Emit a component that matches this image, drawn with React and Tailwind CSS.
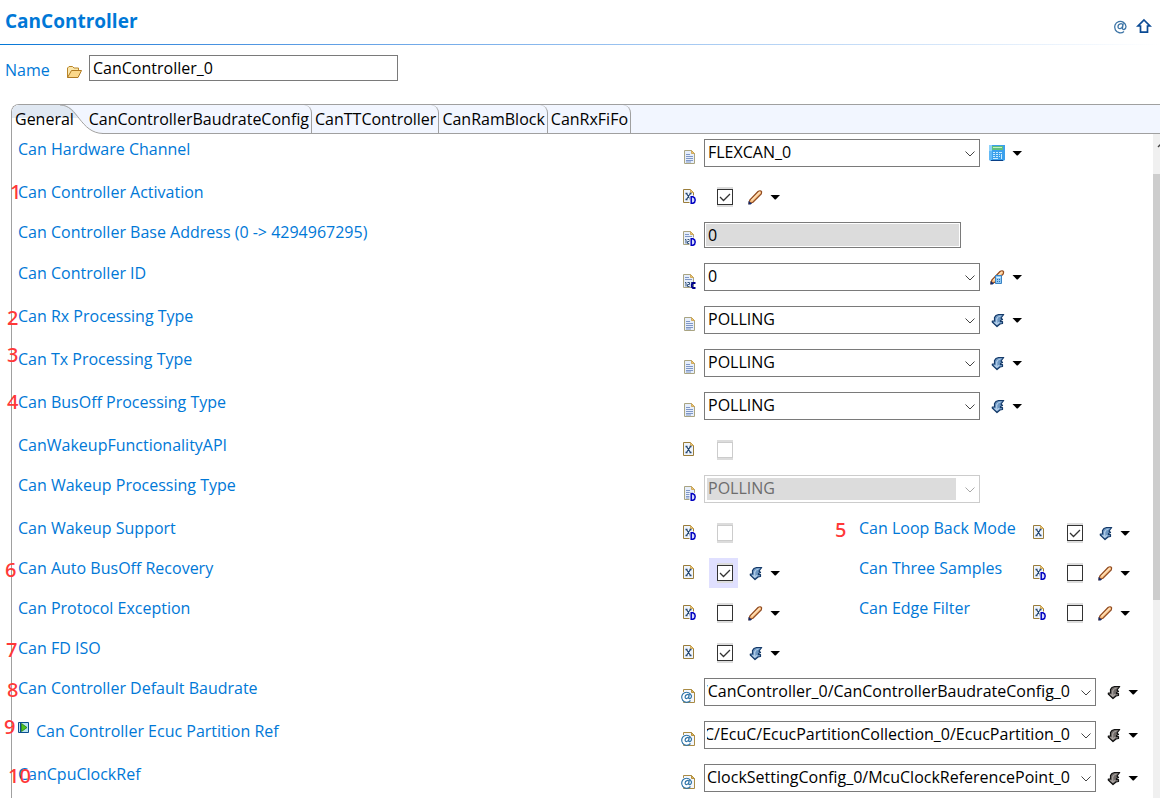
import React from "react";

/* ---------- icons ---------- */

function Badge({ letter }) {
  return letter === "D" ? (
    <g>
      <path d="M8.500 7.500h4.500l2.500 2v5l-2 1.500h-5z" fill="#fff" />
      <path d="M10.200 8.700h1.800q2.200.8 2.200 3.300t-2.200 3.300h-1.800z" fill="#d5dcfb" stroke="#0000c0" strokeWidth="1.500" />
    </g>
  ) : (
    <path d="M14.500 10h-2.500l-1.200 1.200v2.600l1.200 1.200h2.500" fill="none" stroke="#00008c" strokeWidth="1.800" />
  );
}

function DocIcon({ kind, badge }) {
  if (kind === "ref") {
    return (
      <svg viewBox="0 0 16 16" className="h-4 w-4 shrink-0 overflow-visible" aria-hidden="true">
        <path d="M2.500 1.500h8l3 3v10h-11z" fill="#f3f6fc" stroke="#a98b45" />
        <path d="M10.500 1.500v3h3z" fill="#e0b95c" stroke="#b39142" />
        <circle cx="5.500" cy="8.500" r="5.600" fill="#fff" />
        <path d="M9.500 12.500a5 5 0 1 1 1-4.500c0 3-2.900 3.500-2.700 1.500l.5-3.500M8 8c0-2.600-3.900-1.600-3.900 1 0 2.600 3.400 1.800 3.900-1" fill="none" stroke="#2f74a8" strokeWidth="1.200" />
      </svg>
    );
  }
  const isX = kind === "x";
  return (
    <svg viewBox="0 0 16 16" className="h-4 w-4 shrink-0 overflow-visible" aria-hidden="true">
      <g className={kind === "lines" ? "translate-x-px" : ""}>
        <path d="M2.500 1.500h7l3 3v10h-10z" fill={isX ? "#eef4fd" : "#e6eefb"} stroke={isX ? "#9a7d3a" : "#a9a482"} />
        <path d="M9.500 1.500v3h3z" fill="#ecc678" stroke="#c9a049" strokeWidth="0.800" />
        {kind === "lines" && (
          <path d="M4 5.500h4M4 7.500h7M4 9.500h7M4 11.500h7M4 13h5" stroke="#7f97c6" />
        )}
      </g>
      {kind === "num" && (
        <g>
          <path d="M4 4.500h4M4 6.500h7" stroke="#7f97c6" />
          <path d="M4 9.500h1v4M6.500 9.500h2v2h-2v2h2M10 9.500h2v4h-2M10 11.500h2" fill="none" stroke="#35557d" />
        </g>
      )}
      {isX && (
        <path d="M4.500 5.500h2M8.500 5.500h2M4.500 11.500h2M8.500 11.500h2M5.500 5.500l4 6M9.500 5.500l-4 6" stroke="#24466f" strokeWidth="1.300" />
      )}
      {badge && <Badge letter={badge} />}
    </svg>
  );
}

function ActionIcon({ kind }) {
  const cls = "h-4 w-4";
  if (kind === "calc") {
    return (
      <svg viewBox="0 0 16 16" className={cls} aria-hidden="true">
        <path d="M0 0h16v15l-2 1H2l-2-1z" fill="#3ba0ec" />
        <path d="M0 0h3v6H0z" fill="#8fd3fb" />
        <path d="M0 6h3v9H0z" fill="#62b9f6" />
        <path d="M3 1h11v4H3z" fill="#5fc07e" />
        <path d="M4 2h9v1H4z" fill="#c6f0c4" />
        <path d="M4 7h2v1H4zM7 7h2v1H7zM10 7h3v1h-3zM4 9h2v1H4zM7 9h2v1H7zM10 9h1v1h-1zM12 9h1v5h-1zM4 11h2v1H4zM7 11h2v1H7zM10 11h1v1h-1zM4 13h5v1H4z" fill="#c9ebff" />
        <path d="M2 15h12v1H2z" fill="#0a3f86" />
      </svg>
    );
  }
  if (kind === "pencil" || kind === "pencilCalc") {
    return (
      <svg viewBox="0 0 16 16" className={cls} aria-hidden="true">
        <path d="M2 14.500l.8-3.500L11 2.500q1.800-1.200 3-.5t.3 2.800L6 13.200z" fill="#f6ba7c" stroke="#8f4a20" strokeWidth="1.200" />
        <path d="M4.500 11.500L13 3" stroke="#ffe0b8" strokeWidth="1.600" />
        <path d="M1.500 15.500v-3.500l3.500 2.500-1.500 1z" fill="#132a6b" />
        {kind === "pencilCalc" && (
          <g>
            <path d="M6.500 6.500h6v8h-6z" fill="#8fc9f5" stroke="#3a83c4" />
            <path d="M7.500 8.500h4" stroke="#dff5ff" />
            <path d="M8 10.500h1M10 10.500h1M8 12.500h1M10 12.500h1" stroke="#2b6fb3" />
          </g>
        )}
      </svg>
    );
  }
  const dark = kind === "arrowDark";
  return (
    <svg viewBox="0 0 16 16" className={cls} aria-hidden="true">
      <path
        d="M14.700 2.500H9.500Q6.500 3 5.500 5.500V9H3.300v1L8 14.500l3-2.500 2.500-.5V9.500h-2V8.500l2-1-1.500-1.500z"
        fill={dark ? "#6f6a68" : "#6d97c2"}
        stroke={dark ? "#111" : "#153a69"}
        strokeWidth="1.200"
        strokeLinejoin="round"
      />
      <path d="M11.500 4Q8.500 4.500 7.700 7v5.500M5.500 10.300l2.300 2 2.500-2" fill="none" stroke={dark ? "#a9a3a0" : "#b4cfea"} strokeWidth="1.200" />
    </svg>
  );
}

function Action({ kind, label }) {
  return (
    <div className="ml-[9px] flex items-center gap-[7px]">
      <button type="button" aria-label={"Edit " + label}>
        <ActionIcon kind={kind} />
      </button>
      <button type="button" aria-label={"Options for " + label}>
        <svg viewBox="0 0 10 6" className="h-1.5 w-2.5" aria-hidden="true">
          <path d="M.5 1h9.500L5.700 5.500h-.9z" fill="#000" />
        </svg>
      </button>
    </div>
  );
}

/* ---------- controls ---------- */

function Combo({ id, value, wide, disabled }) {
  return (
    <div
      className={
        "relative flex h-7 shrink-0 border bg-white p-0.5 " +
        (wide ? "w-[392px] " : "w-[276px] ") +
        (disabled ? "border-[#cccccc]" : "border-[#7a7a7a]")
      }
    >
      <select
        id={id}
        disabled={disabled}
        defaultValue={value}
        className={
          "min-w-0 flex-1 appearance-none pb-0.5 leading-5 outline-none " +
          (wide ? "pr-[23px] [direction:rtl] " : "pl-px ") +
          (disabled ? "mr-[21px] bg-[#dcdcdc] text-[#6d6d6d] opacity-100" : "bg-transparent text-black")
        }
      >
        <option value={value}>{value}</option>
      </select>
      <svg
        viewBox="0 0 10 6"
        className="pointer-events-none absolute top-[11px] right-1 h-1.5 w-2.5"
        aria-hidden="true"
      >
        <path d="M.5 .5L5 5L9.500 .5" fill="none" stroke={disabled ? "#a8a8a8" : "#444"} />
      </svg>
    </div>
  );
}

function Check({ id, checked, disabled, active }) {
  return (
    <span className={"ml-[5px] flex h-[30px] w-[29px] shrink-0 items-center pl-2 " + (active ? "bg-[#e0e0ff]" : "")}>
      <span className="relative grid h-5 w-4 place-items-center bg-[#dcdcdc]">
        <input
          id={id}
          type="checkbox"
          defaultChecked={checked}
          disabled={disabled}
          className={
            "peer h-4 w-4 appearance-none border bg-white " + (disabled ? "border-[#cccccc]" : "border-[#333333]")
          }
        />
        <svg
          viewBox="0 0 16 16"
          className="pointer-events-none invisible absolute top-0.5 left-0 h-4 w-4 peer-checked:visible"
          aria-hidden="true"
        >
          <path d="M3 8l3.500 3.500L13 5" fill="none" stroke="#333" strokeWidth="1.300" />
        </svg>
      </span>
    </span>
  );
}

function Field({ f }) {
  const id = f.label.replace(/[^A-Za-z]/g, "");
  const iconPad = f.type === "combo" ? "pt-2.5" : f.type === "text" ? "pt-2" : "pt-1.5";
  return (
    <>
      <div className={"w-[23px] shrink-0 " + iconPad}>
        <DocIcon kind={f.icon} badge={f.badge} />
      </div>
      <div className="flex items-center">
        {f.type === "combo" && <Combo id={id} value={f.value} wide={f.wide} disabled={f.disabled} />}
        {f.type === "text" && (
          <input
            id={id}
            type="text"
            readOnly
            value={f.value}
            className="h-[26px] w-[257px] border border-[#7a7a7a] bg-[#dcdcdc] px-[3px] shadow-[inset_0_0_0_1px_white] outline-none"
          />
        )}
        {f.type === "check" && <Check id={id} checked={f.checked} disabled={f.disabled} active={f.active} />}
        {f.action && <Action kind={f.action} label={f.label} />}
      </div>
    </>
  );
}

function Note({ n }) {
  return (
    <span className={"pointer-events-none absolute font-['Noto_Sans',sans-serif] text-xl leading-5 font-medium text-[#ff3838] " + n.at}>
      {n.text}
    </span>
  );
}

function FieldLabel({ f }) {
  return (
    <div className="relative flex gap-[7px] leading-5 whitespace-nowrap text-[#0078d7]">
      {f.marker && (
        <svg viewBox="0 0 11 11" className="mt-px h-[11px] w-[11px]" aria-hidden="true">
          <path d="M.5 .5h10v10H.5z" fill="#b9e3f2" stroke="#0b4f8f" />
          <path d="M2.500 1v9" stroke="#0b4f8f" />
          <path d="M3.500 1.500l5.500 4-5.500 4z" fill="#4fc21e" stroke="#1e7a12" strokeWidth="0.800" />
        </svg>
      )}
      <label htmlFor={f.label.replace(/[^A-Za-z]/g, "")}>{f.label}</label>
      {f.note && <Note n={f.note} />}
    </div>
  );
}

/* ---------- data ---------- */

const rows = [
  { label: "Can Hardware Channel", type: "combo", icon: "lines", value: "FLEXCAN_0", action: "calc" },
  { label: "Can Controller Activation", type: "check", icon: "x", badge: "D", checked: true, action: "pencil", note: { text: "1", at: "top-0 -left-2" } },
  { label: "Can Controller Base Address (0 -> 4294967295)", type: "text", icon: "num", badge: "D", value: "0" },
  { label: "Can Controller ID", type: "combo", icon: "num", badge: "C", value: "0", action: "pencilCalc" },
  { label: "Can Rx Processing Type", type: "combo", icon: "lines", value: "POLLING", action: "arrow", note: { text: "2", at: "top-0.5 -left-[11px]" } },
  { label: "Can Tx Processing Type", type: "combo", icon: "lines", value: "POLLING", action: "arrow", note: { text: "3", at: "-top-1 -left-[11px]" } },
  { label: "Can BusOff Processing Type", type: "combo", icon: "lines", value: "POLLING", action: "arrow", note: { text: "4", at: "top-0 -left-[11px]" } },
  { label: "CanWakeupFunctionalityAPI", type: "check", icon: "x", disabled: true },
  { label: "Can Wakeup Processing Type", type: "combo", icon: "lines", badge: "D", value: "POLLING", disabled: true },
  {
    label: "Can Wakeup Support", type: "check", icon: "x", badge: "D", disabled: true,
    second: { label: "Can Loop Back Mode", type: "check", icon: "x", checked: true, action: "arrow", note: { text: "5", at: "top-0.5 -left-6" } },
  },
  {
    label: "Can Auto BusOff Recovery", type: "check", icon: "x", checked: true, active: true, action: "arrow", note: { text: "6", at: "top-0.5 -left-[13px]" },
    second: { label: "Can Three Samples", type: "check", icon: "x", badge: "D", action: "pencil" },
  },
  {
    label: "Can Protocol Exception", type: "check", icon: "x", badge: "D", action: "pencil",
    second: { label: "Can Edge Filter", type: "check", icon: "x", badge: "D", action: "pencil" },
  },
  { label: "Can FD ISO", type: "check", icon: "x", checked: true, action: "arrow", note: { text: "7", at: "top-0.5 -left-3" } },
  { label: "Can Controller Default Baudrate", type: "combo", wide: true, icon: "ref", value: "t/CanController_0/CanControllerBaudrateConfig_0", action: "arrowDark", note: { text: "8", at: "top-0.5 -left-[11px]" } },
  { label: "Can Controller Ecuc Partition Ref", type: "combo", wide: true, icon: "ref", marker: true, value: "uC/EcuC/EcucPartitionCollection_0/EcucPartition_0", action: "arrowDark", note: { text: "9", at: "-top-1 -left-3.5" } },
  { label: "CanCpuClockRef", type: "combo", wide: true, icon: "ref", value: "ClockSettingConfig_0/McuClockReferencePoint_0", action: "arrowDark", note: { text: "10", at: "top-0.5 -left-2.5" } },
];

const tabs = ["CanTTController", "CanRamBlock", "CanRxFiFo"];

/* ---------- page ---------- */

function Row({ f }) {
  const height = f.type === "combo" ? "h-[43px]" : f.type === "text" ? "h-[41px]" : "h-10";
  return (
    <div className={"flex items-start last:h-7 " + height}>
      <div className="min-w-0 flex-1">
        <FieldLabel f={f} />
      </div>
      <div className="flex w-[472px] shrink-0 items-start">
        <div className={"flex items-start " + (f.second ? "w-[178px]" : "")}>
          <Field f={f} />
        </div>
        {f.second && (
          <>
            <div className="w-[172px]">
              <FieldLabel f={f.second} />
            </div>
            <Field f={f.second} />
          </>
        )}
      </div>
    </div>
  );
}

export default function App() {
  return (
    <div className="flex min-h-screen flex-col overflow-x-hidden bg-white font-['Open_Sans','Noto_Sans',sans-serif] text-base text-black">
      <header>
        <div className="flex h-11 items-center justify-between pr-2 pl-[5px]">
          <h1 className="pb-0.5 text-[19px] leading-6 font-bold text-[#0078d7]">CanController</h1>
          <div className="flex items-center gap-2 pt-2">
            <button type="button" aria-label="References">
              <svg viewBox="0 0 16 16" className="h-4 w-4" aria-hidden="true">
                <path d="M12 13.500a5.700 5.700 0 1 1 2-5c0 3.500-4 4-3.500 1.500l.7-4.500M10.800 7.500c0-3-4.800-2-4.800 1.200 0 3 4.200 2.300 4.800-1.200" fill="none" stroke="#3c74a6" strokeWidth="1.300" />
              </svg>
            </button>
            <button type="button" aria-label="Up">
              <svg viewBox="0 0 16 16" className="h-4 w-4" aria-hidden="true">
                <path d="M8 2L14 8H11.500v6.200h-7V8H2z" fill="#fff" stroke="#0a4a94" strokeWidth="1.700" />
              </svg>
            </button>
          </div>
        </div>
        <div className="h-px bg-linear-to-r from-[#0078d7] to-white" />
      </header>

      <div className="flex items-start pt-2.5 pl-[5px]">
        <label htmlFor="name" className="w-[61px] pt-[5px] leading-5 text-[#0078d7]">
          Name
        </label>
        <svg viewBox="0 0 16 14" className="mt-2.5 mr-[7px] h-3.5 w-4" aria-hidden="true">
          <path d="M1.500 12.500V3l1.500-1.500h3.500L8 3h4.500v3" fill="#fbe7ac" stroke="#b98528" />
          <path d="M1.500 12.500l4-7h10l-3.500 7z" fill="#fbd88a" stroke="#b07a22" />
        </svg>
        <input
          id="name"
          type="text"
          defaultValue="CanController_0"
          className="h-[26px] w-[309px] border border-[#7a7a7a] bg-white px-[3px] outline-none"
        />
      </div>

      <div className="mt-[23px] ml-[11px] flex flex-1 flex-col rounded-tl-lg border-t border-l border-[#a0a0a0]">
        <div role="tablist" className="flex h-[29px] rounded-tl-lg border-b border-[#a0a0a0] bg-[#f2f6ff]">
          <button type="button" role="tab" aria-selected="true" className="relative w-[79px] text-left">
            <svg viewBox="0 0 92 29" className="absolute top-0 left-0 h-[29px] w-[92px]" aria-hidden="true">
              <path d="M0 29V7Q1 0 7 0H50C66 0 68 26 90 28V29z" fill="#fff" />
              <path d="M0 13V7Q1 0 7 0H50C58 0 62 5 67 13z" fill="#e0e8f2" />
              <path d="M48 0C66 0 68 28 91 28.500" fill="none" stroke="#a0a0a0" />
            </svg>
            <span className="relative pl-[3px]">General</span>
          </button>
          <button type="button" role="tab" aria-selected="false" className="relative flex w-[221px] items-center justify-end rounded-tr-lg border-r border-[#a0a0a0] pr-0.5">
            CanControllerBaudrateConfig
          </button>
          {tabs.map((t) => (
            <button key={t} type="button" role="tab" aria-selected="false" className="rounded-tr-lg border-r border-[#a0a0a0] pr-0.5 pl-[3px]">
              {t}
            </button>
          ))}
        </div>

        <div className="flex flex-1">
          <main className="min-w-0 flex-1 pt-[5px] pl-1.5">
            {rows.map((f) => (
              <Row key={f.label} f={f} />
            ))}
          </main>
          <div className="flex w-[7px] flex-col overflow-hidden bg-[#f0f0f0]" aria-hidden="true">
            <svg viewBox="0 0 7 40" className="h-10 w-[7px]">
              <path d="M5 13l3-3" fill="none" stroke="#444" strokeWidth="1.500" />
            </svg>
            <div className="h-[426px] bg-[#cdcdcd]" />
          </div>
        </div>
      </div>
    </div>
  );
}
